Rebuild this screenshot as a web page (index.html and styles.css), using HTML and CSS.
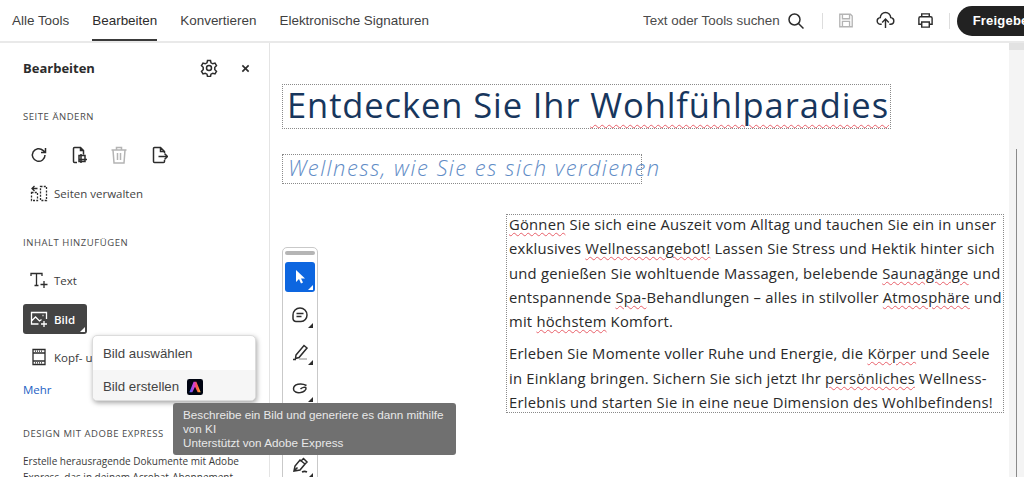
FILE: index.html
```html
<!DOCTYPE html>
<html lang="de">
<head>
  <meta charset="UTF-8">
  <title>Bearbeiten</title>
  <link rel="stylesheet" href="styles.css">
</head>
<body>
<div class="Top">
  <div class="Top__Tabs">
    <span class="Top__Tab">Alle Tools</span>
    <span class="Top__Tab Top__Tab--active">Bearbeiten</span>
    <span class="Top__Tab">Konvertieren</span>
    <span class="Top__Tab">Elektronische Signaturen</span>
  </div>
  <div class="Top__Tools">
    <span class="Top__Search">Text oder Tools suchen</span>
    <svg class="Icon Top__SearchIcon" viewBox="0 0 18 18"><circle cx="7.5" cy="7.5" r="5.5"/><path d="M11.5 11.5L16.5 16.5"/></svg>
    <span class="Top__Sep Top__Sep--a"></span>
    <svg class="Icon Icon--off Top__Save" viewBox="0 0 18 18"><path d="M2 2h12l2 2v12H2zM5 2v5h8V2M5 16v-6h8v6"/></svg>
    <svg class="Icon Top__Upload" viewBox="0 0 20 20"><path d="M6 14H5a3.500 3.500 0 0 1-.5-7 5.500 5.500 0 0 1 11 0 3.500 3.500 0 0 1-.5 7h-1M10 18V9M6.500 12L10 8.500l3.500 3.500"/></svg>
    <svg class="Icon Top__Print" viewBox="0 0 18 18"><path d="M5 5V2h8v3M5 13H2V6.500A1.500 1.500 0 0 1 3.500 5h11A1.500 1.500 0 0 1 16 6.500V13h-3M5 10.500h8V16H5z"/></svg>
    <span class="Top__Sep"></span>
    <span class="Top__Share">Freigeben</span>
  </div>
</div>

<div class="Main">
  <div class="Panel">
    <div class="Panel__Head">
      <span class="Panel__Title">Bearbeiten</span>
      <svg class="Icon Panel__Gear" viewBox="0 0 18 18"><circle cx="9" cy="9" r="2.500"/><path d="M7.500 1.500h3l.5 2.300 1.800 1 2.200-.7 1.500 2.600-1.700 1.600v2.400l1.700 1.600-1.500 2.600-2.200-.7-1.800 1-.5 2.300h-3l-.5-2.300-1.800-1-2.200.7-1.500-2.600 1.700-1.600V8.300L1.500 6.700 3 4.100l2.200.7 1.800-1z"/></svg>
      <svg class="Icon Panel__Close" viewBox="0 0 10 10"><path d="M1.500 1.500l7 7M8.500 1.500l-7 7"/></svg>
    </div>

    <div class="Panel__Label Panel__Label--first">SEITE ÄNDERN</div>
    <div class="Panel__Icons">
      <svg class="Icon" viewBox="0 0 18 18"><path d="M15 9a6.300 6.300 0 1 1-2-4.600L15.500 6.500M15.500 2v4.500H11"/></svg>
      <svg class="Icon" viewBox="0 0 18 18"><path d="M7 16.500H4.500a1 1 0 0 1-1-1v-13a1 1 0 0 1 1-1h6l3 3v4M10.500 1.500v3h3M9 9.500h6v6H9zM11 8v9M9 13.500h8"/></svg>
      <svg class="Icon Icon--off" viewBox="0 0 18 18"><path d="M1.500 4h15M6.500 4V1.500h5V4M3 4l1 13h10l1-13M7.500 7v7M10.500 7v7"/></svg>
      <svg class="Icon" viewBox="0 0 18 18"><path d="M14.500 7V5.500l-4-4h-6a1 1 0 0 0-1 1v13a1 1 0 0 0 1 1h9a1 1 0 0 0 1-1V14M10.500 1.500v4h4M8.500 10.500h9M14.500 7.500l3 3-3 3"/></svg>
    </div>
    <div class="Panel__Row Panel__Row--manage">
      <svg class="Icon Panel__RowIcon" viewBox="0 0 18 18"><path d="M10.500 2.500h6v14h-6zM1.500 8.500h6v8h-6z" stroke-dasharray="2 1.300"/><path d="M7.500 4.500H2.500M4.500 2l-2.500 2.500L4.500 7"/></svg>
      Seiten verwalten
    </div>

    <div class="Panel__Label Panel__Label--content">INHALT HINZUFÜGEN</div>
    <div class="Panel__Row Panel__Row--text">
      <svg class="Icon Panel__RowIcon" viewBox="0 0 18 18"><path d="M1 5V2.500h11V5M6.500 2.500v12M4.500 14.500h4M14 10v7M10.500 13.500h7"/></svg>
      Text
    </div>
    <div class="Panel__Row Panel__Row--active">
      <svg class="Icon Panel__RowIcon" viewBox="0 0 18 18"><path d="M8.500 14H1.500V2.500h15V9M1.500 11l4-4 4 4 2-1.500M12.500 5.500h1M14 11v6M11 14h6"/></svg>
      Bild
      <span class="Corner Corner--white Panel__RowCorner"></span>
    </div>
    <div class="Panel__Row Panel__Row--header">
      <svg class="Icon Panel__RowIcon" viewBox="0 0 18 18"><path d="M3 1.500h12v15H3zM3 5h12M3 13h12" /><path class="Icon__Dots" d="M5 3.200h8M5 14.800h8"/></svg>
      Kopf- und Fußzeile
    </div>
    <div class="Panel__More">Mehr</div>

    <div class="Panel__Label Panel__Label--design">DESIGN MIT ADOBE EXPRESS</div>
    <div class="Panel__Copy">Erstelle herausragende Dokumente mit Adobe Express, das in deinem Acrobat-Abonnement enthalten ist.</div>
  </div>

  <div class="Canvas">
    <div class="Doc">
      <div class="Box Doc__Title">Entdecken Sie Ihr <span class="Spell Spell--title">Wohlfühlparadies</span></div>
      <div class="Box Doc__Sub">Wellness, wie Sie es sich verdienen</div>
      <div class="Box Doc__Body">
        <p><span class="Spell">Gönnen</span> Sie sich eine Auszeit vom Alltag und tauchen Sie ein in unser<br>
        exklusives <span class="Spell">Wellnessangebot!</span> Lassen Sie Stress und Hektik hinter sich<br>
        und genießen Sie wohltuende Massagen, belebende <span class="Spell">Saunagänge</span> und<br>
        entspannende <span class="Spell">Spa-</span>Behandlungen – alles in stilvoller <span class="Spell">Atmosphäre</span> und<br>
        mit <span class="Spell">höchstem</span> Komfort.</p>
        <p>Erleben Sie Momente voller Ruhe und Energie, die <span class="Spell">Körper</span> und Seele<br>
        in Einklang bringen. Sichern Sie sich jetzt Ihr <span class="Spell">persönliches</span> Wellness-<br>
        Erlebnis und starten Sie in eine neue Dimension des Wohlbefindens!</p>
      </div>
    </div>

    <div class="Scroll"><div class="Scroll__Btn"></div><div class="Scroll__Thumb"></div></div>

    <div class="Rail">
      <div class="Rail__Grip"></div>
      <div class="Rail__Btn Rail__Btn--on">
        <svg class="Rail__Arrow" viewBox="0 0 14 16"><path d="M3 1v12l3-3 2 4.500 2-1-2-4h4z"/></svg>
        <span class="Corner Corner--white"></span>
      </div>
      <div class="Rail__Btn">
        <svg class="Icon" viewBox="0 0 18 18"><path d="M9 2a7 7 0 0 1 7 7c0 3.500-2.500 6.500-6 6.500H5A3 3 0 0 1 2 12.500V9a7 7 0 0 1 7-7zM5.500 7.500h7M5.500 10.500h5"/></svg>
        <span class="Corner"></span>
      </div>
      <div class="Rail__Btn">
        <svg class="Icon" viewBox="0 0 18 18"><path d="M5 12L13 2.500l3 2.500-8 9.500-3.500 1zM2 16.500h3"/><path class="Icon__Faint" d="M8 16h8"/></svg>
        <span class="Corner"></span>
      </div>
      <div class="Rail__Btn">
        <svg class="Icon" viewBox="0 0 18 18"><path d="M15.500 5.500C10 2.500 2.500 4 2.500 9c0 3 3.500 4 7 3.500 3-.5 6-2.500 5.500-4.500-.5-1.500-4-.5-5.500 1"/></svg>
        <span class="Corner"></span>
      </div>
      <div class="Rail__Btn Rail__Btn--gap">
        <svg class="Icon" viewBox="0 0 18 18"><path d="M3 15l1-5 5-6 5 4-5 6zM6.500 11.500L3 15M14 8l2-2-3.500-3.500-2 2M11 16c2-1 3-1 5 0"/></svg>
        <span class="Corner"></span>
      </div>
    </div>
  </div>
</div>

<div class="Menu">
  <div class="Menu__Item">Bild auswählen</div>
  <div class="Menu__Item Menu__Item--hover">Bild erstellen
    <svg class="Menu__Logo" viewBox="0 0 17 17">
      <defs>
        <linearGradient id="expressGrad" x1="0" y1="0" x2="1" y2="0">
          <stop offset="0" stop-color="#3a6bff"/>
          <stop offset=".4" stop-color="#d23bd8"/>
          <stop offset=".7" stop-color="#ff5a3c"/>
          <stop offset="1" stop-color="#ffc93c"/>
        </linearGradient>
      </defs>
      <rect width="17" height="17" rx="2.500" fill="#000512"/>
      <path d="M7 3h3l4.500 11h-3.200L8.500 8.300 5.700 14H2.500z" fill="url(#expressGrad)"/>
    </svg>
  </div>
</div>

<div class="Tip">Beschreibe ein Bild und generiere es dann mithilfe von KI<br>Unterstützt von Adobe Express</div>
</body>
</html>
```

FILE: styles.css
```css
html, body {
  margin: 0;
  padding: 0;
  height: 100%;
  overflow: hidden;
  background-color: #ffffff;
  font-family: "Liberation Sans", Arial, sans-serif;
}

body {
  display: flex;
  flex-direction: column;
  position: relative;
}

.Icon {
  width: 18px;
  height: 18px;
  fill: none;
  stroke: #2c2c2c;
  stroke-width: 1.500;
  flex: none;
}

.Icon--off {
  stroke: #b4b4b4;
}

.Icon__Faint {
  stroke: #b0b0b0;
}

.Icon__Dots {
  stroke-dasharray: 1 1;
}

/* Top bar */
.Top {
  height: 41px;
  flex: none;
  display: flex;
  justify-content: space-between;
  border-bottom: 2px solid #e9e9e9;
}

.Top__Tabs {
  display: flex;
  gap: 23px;
  padding-left: 12px;
}

.Top__Tab {
  height: 41px;
  line-height: 41px;
  font-size: 13.450px;
  color: #3f3f3f;
  box-sizing: border-box;
}

.Top__Tab--active {
  color: #2c2c2c;
  border-bottom: 2px solid #3a3a3a;
}

.Top__Tools {
  display: flex;
  align-items: center;
  width: 381px;
  flex: none;
  overflow: hidden;
}

.Top__Search {
  font-size: 13.400px;
  color: #4b4b4b;
  white-space: nowrap;
}

.Top__SearchIcon {
  margin-left: 7px;
}

.Top__Sep {
  width: 1px;
  height: 16px;
  background-color: #dddddd;
  margin: 0 7px 0 15px;
  flex: none;
}

.Top__Sep--a {
  margin: 0 15px 0 17px;
}

.Top__Save {
  width: 16px;
  height: 17px;
}

.Top__Upload {
  width: 19px;
  height: 19px;
  margin-left: 22px;
}

.Top__Print {
  width: 17px;
  height: 17px;
  margin-left: 22px;
}

.Top__Share {
  height: 30px;
  line-height: 29px;
  padding: 0 30px 0 16px;
  border-radius: 15px;
  background-color: #222222;
  color: #ffffff;
  font-size: 13px;
  font-weight: 700;
  letter-spacing: .2px;
  white-space: nowrap;
  flex: none;
}

/* Left panel and canvas */
.Main {
  flex: 1;
  display: flex;
  min-height: 0;
}

.Panel {
  width: 270px;
  flex: none;
  box-sizing: border-box;
  border-right: 1px solid #e4e4e4;
  padding: 0 0 0 23px;
  font-family: "Open Sans", "Noto Sans", sans-serif;
  color: #3a3a3a;
  overflow: hidden;
}

.Panel__Head {
  display: flex;
  align-items: center;
  height: 50px;
}

.Panel__Title {
  font-size: 13px;
  font-weight: 700;
  color: #2c2c2c;
  width: 177px;
}

.Panel__Close {
  width: 9px;
  height: 9px;
  margin-left: 23px;
  stroke-width: 1.800;
}

.Panel__Label {
  font-size: 9.500px;
  line-height: 14px;
  letter-spacing: .55px;
  color: #4b4b4b;
}

.Panel__Label--first {
  margin-top: 17px;
}

.Panel__Label--content {
  margin-top: 28px;
}

.Panel__Label--design {
  margin-top: 29px;
}

.Panel__Icons {
  display: flex;
  gap: 22px;
  padding-left: 7px;
  margin-top: 22px;
  height: 18px;
}

.Panel__Row {
  display: flex;
  align-items: center;
  position: relative;
  gap: 6px;
  width: 64px;
  height: 30px;
  box-sizing: border-box;
  padding-left: 7px;
  font-size: 11.500px;
  white-space: nowrap;
  border-radius: 3px;
}

.Panel__RowIcon {
  width: 18px;
  height: 18px;
  stroke-width: 1.300;
}

.Panel__Row--manage {
  margin-top: 14px;
  color: #444444;
}

.Panel__Row--text {
  margin-top: 15px;
}

.Panel__Row--active {
  margin-top: 9px;
  background-color: #444444;
  color: #ffffff;
  font-weight: 600;
}

.Panel__Row--active .Icon {
  stroke: #ffffff;
}

.Panel__Row--header {
  margin-top: 8px;
}

.Panel__More {
  margin-top: 10px;
  font-size: 11.500px;
  line-height: 16px;
  color: #1e62c4;
}

.Panel__Copy {
  margin-top: 12px;
  font-size: 10px;
  line-height: 16px;
  width: 228px;
  color: #3a3a3a;
}

.Corner {
  position: absolute;
  right: 2px;
  bottom: 2px;
  width: 0;
  height: 0;
  border-left: 5px solid transparent;
  border-bottom: 5px solid #2c2c2c;
}

.Corner--white {
  border-bottom-color: #ffffff;
}

.Canvas {
  flex: 1;
  position: relative;
  overflow: hidden;
  min-width: 0;
}

.Doc {
  padding: 41px 0 0 12px;
  font-family: "Open Sans", "Noto Sans", sans-serif;
}

.Box {
  border: 1px dotted #8a8a8a;
  box-sizing: border-box;
}

.Doc__Title {
  width: 609px;
  height: 45px;
  padding-left: 4px;
  font-size: 34.500px;
  line-height: 40px;
  letter-spacing: .9px;
  color: #17365d;
  white-space: nowrap;
}

.Doc__Sub {
  width: 360px;
  height: 30px;
  margin-top: 25px;
  padding-left: 5px;
  font-size: 22px;
  line-height: 25px;
  font-style: italic;
  font-weight: 300;
  letter-spacing: 1.450px;
  color: #5f8cc6;
  white-space: nowrap;
}

.Doc__Body {
  width: 498px;
  height: 199px;
  margin: 30px 0 0 224px;
  padding: 0 2px;
  font-size: 14.800px;
  line-height: 24.300px;
  letter-spacing: .21px;
  color: #2a2a2a;
  white-space: nowrap;
}

.Doc__Body p {
  margin: -3px 0 11px;
}

.Spell {
  text-decoration: underline wavy #e8606a 1px;
  text-underline-offset: 2px;
}

.Spell--title {
  text-underline-offset: 6px;
}

.Scroll {
  position: absolute;
  top: 0;
  right: 0;
  bottom: 0;
  width: 15px;
  background-color: #f4f4f4;
}

.Scroll__Btn {
  height: 7px;
  background-color: #e2e2e2;
}

.Scroll__Thumb {
  position: absolute;
  left: 7px;
  top: 106px;
  bottom: 0;
  width: 1px;
  background-color: #8a8a8a;
}

/* Floating tool rail */
.Rail {
  position: absolute;
  left: 12px;
  top: 204px;
  width: 36px;
  height: 260px;
  box-sizing: border-box;
  border: 1px solid #c9c9c9;
  border-radius: 5px;
  background-color: #ffffff;
  padding: 3px 2px 0;
}

.Rail__Grip {
  height: 4px;
  border-radius: 2px;
  background-color: #b5b5b5;
  margin-bottom: 7px;
}

.Rail__Btn {
  position: relative;
  width: 30px;
  height: 30px;
  margin-bottom: 7px;
  border-radius: 3px;
  display: flex;
  align-items: center;
  justify-content: center;
}

.Rail__Btn--on {
  background-color: #0d66e0;
  margin-bottom: 8px;
}

.Rail__Btn--gap {
  margin-top: 46px;
}

.Rail__Arrow {
  width: 14px;
  height: 16px;
  fill: #ffffff;
}

/* Popups */
.Menu {
  position: absolute;
  left: 92px;
  top: 335px;
  width: 164px;
  height: 66px;
  box-sizing: border-box;
  border: 1px solid #dcdcdc;
  border-radius: 5px;
  background-color: #ffffff;
  box-shadow: 1px 2px 5px rgba(0, 0, 0, .35);
  padding-top: 1px;
  overflow: hidden;
}

.Menu__Item {
  display: flex;
  align-items: center;
  gap: 8px;
  height: 33px;
  padding-left: 10px;
  font-size: 13.300px;
  color: #444444;
}

.Menu__Item--hover {
  background-color: #f6f6f6;
}

.Menu__Logo {
  width: 16px;
  height: 16px;
}

.Tip {
  position: absolute;
  left: 173px;
  top: 403px;
  width: 283px;
  height: 52px;
  box-sizing: border-box;
  padding: 5px 9px 5px 10px;
  border-radius: 3px;
  background-color: #707070;
  color: #e8e8e8;
  font-size: 11.700px;
  line-height: 14.200px;
}
```
